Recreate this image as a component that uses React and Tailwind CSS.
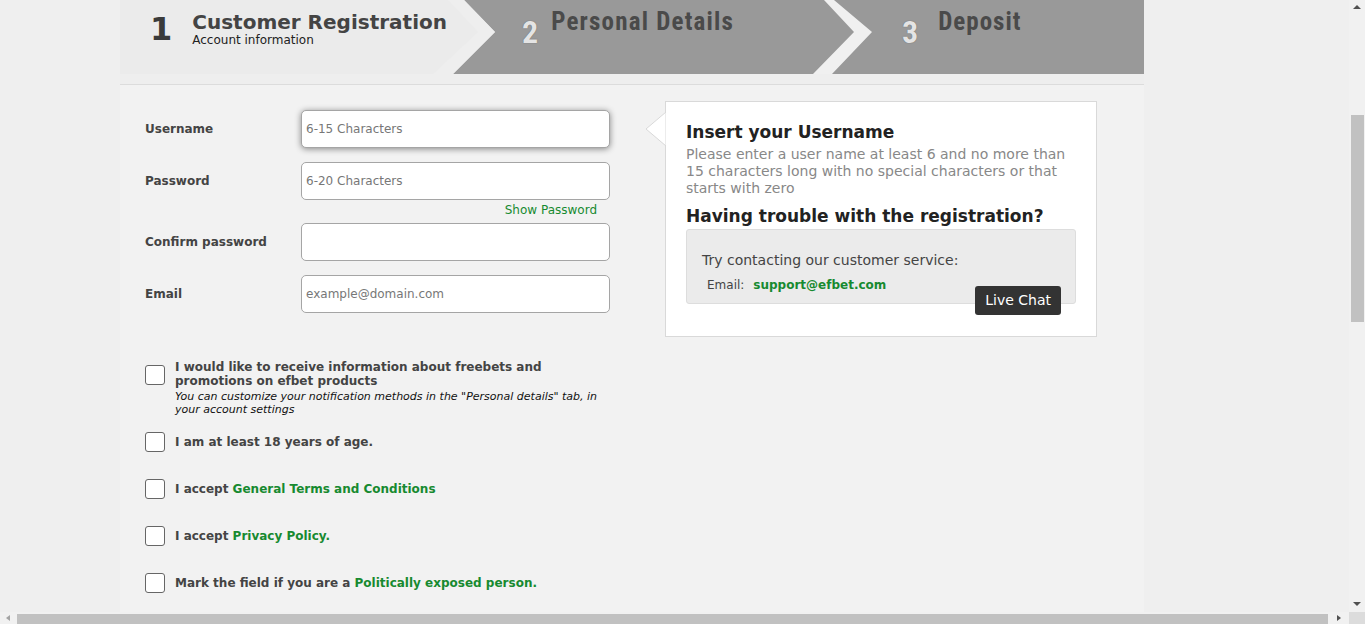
import React from "react"

const font = { fontFamily: '"DejaVu Sans", Verdana, sans-serif' }
const narrow = { fontFamily: '"Liberation Sans Narrow", "Roboto Condensed", "Liberation Sans", sans-serif' }

function StepHeader() {
  return (
    <div className="relative h-[74px]">
      {/* step shapes */}
      <svg className="absolute inset-0" width="1024" height="74" viewBox="0 0 1024 74">
        <rect x="0" y="0" width="1024" height="74" fill="#999999" />
        <polygon points="0,0 344,0 375,32 333,74 0,74" fill="#ebebeb" />
        <polygon points="328,0 344,0 375,32 333,74 313,74 358,32" fill="#eeeeee" />
        <polygon points="704,0 714,0 752,32 712,74 693,74 734,32" fill="#f0f0f0" />
      </svg>
      <div className="relative flex h-full">
        <div className="w-[375px] pl-[30px] flex items-start pt-[10px]">
          <span className="text-[32px] leading-[36px] font-bold text-[#3a3a3a] mt-[1px]" style={font}>1</span>
          <div className="ml-[20px]">
            <div className="text-[20px] leading-[24px] font-bold text-[#444]" style={font}>Customer Registration</div>
            <div className="text-[12px] leading-[13px] text-[#222]" style={font}>Account information</div>
          </div>
        </div>
        <div className="w-[377px] pl-[27px] flex items-start pt-[6px]">
          <span
            className="text-[32px] leading-[36px] font-bold text-[#e4e4e4] mt-[8px] [text-shadow:0_0_1px_#555]"
            style={narrow}
          >
            2
          </span>
          <span className="ml-[13px] mt-[1px] text-[25px] leading-[30px] font-bold tracking-[1.2px] text-[#4a4a4a]" style={narrow}>
            Personal Details
          </span>
        </div>
        <div className="flex-1 pl-[30px] flex items-start pt-[6px]">
          <span
            className="text-[32px] leading-[36px] font-bold text-[#e4e4e4] mt-[8px] [text-shadow:0_0_1px_#555]"
            style={narrow}
          >
            3
          </span>
          <span className="ml-[20px] mt-[1px] text-[25px] leading-[30px] font-bold tracking-[1px] text-[#4a4a4a]" style={narrow}>
            Deposit
          </span>
        </div>
      </div>
    </div>
  )
}

function Field({ label, placeholder, focused, children }) {
  return (
    <div>
      <div className="flex items-center">
        <label className="w-[156px] text-[12px] font-bold text-[#444]" style={font}>{label}</label>
        <input
          placeholder={placeholder}
          className={`w-[309px] h-[38px] bg-white border border-[#a5a5a5] rounded-[5px] px-[4px] text-[12px] text-[#333] placeholder:text-[#777] outline-none ${focused ? "shadow-[0_1px_6px_rgba(0,0,0,0.45)]" : ""}`}
          style={font}
        />
      </div>
      {children}
    </div>
  )
}

function Check({ children, className = "" }) {
  return (
    <div className={`flex items-center gap-[10px] ${className}`}>
      <div className="w-[20px] h-[20px] shrink-0 bg-white border border-[#666] rounded-[3px]"></div>
      <div className="text-[12px] font-bold text-[#444]" style={font}>{children}</div>
    </div>
  )
}

function VScroll() {
  return (
    <div className="w-[16px] bg-[#f1f1f1] flex flex-col items-center">
      <svg width="16" height="15" viewBox="0 0 16 15"><polygon points="4,9 12,9 8,5" fill="#505050" /></svg>
      <div className="h-[100px]"></div>
      <div className="w-[13px] ml-[1px] h-[207px] bg-[#c1c1c1]"></div>
      <div className="flex-1"></div>
      <svg width="16" height="15" viewBox="0 0 16 15"><polygon points="4,5 12,5 8,9" fill="#505050" /></svg>
    </div>
  )
}

function HScroll() {
  return (
    <div className="h-[12px] flex bg-[#f1f1f1]">
      <svg width="17" height="12" viewBox="0 0 17 12"><polygon points="10,3 10,9 6,6" fill="#a3a3a3" /></svg>
      <div className="w-[1311px] mt-[2px] h-[10px] bg-[#c1c1c1]"></div>
      <div className="flex-1 flex items-center justify-center">
        <svg width="8" height="12" viewBox="0 0 8 12"><polygon points="2,3 2,9 6,6" fill="#505050" /></svg>
      </div>
      <div className="w-[16px] bg-[#dcdcdc]"></div>
    </div>
  )
}

export default function App() {
  return (
    <div className="w-[1365px] h-[624px] flex flex-col overflow-hidden bg-[#efefef]">
      <div className="flex flex-1 min-h-0">
        <div className="flex-1 overflow-hidden">
          <div className="ml-[120px] w-[1024px] h-full bg-[#f2f2f2]">
            <StepHeader />
            <div className="h-[11px] bg-[#eeeeee] border-b border-[#dcdcdc]"></div>

            <div className="flex pl-[25px]">
              {/* form column */}
              <div className="w-[465px] pt-[25px]">
                <Field label="Username" placeholder="6-15 Characters" focused />
                <div className="h-[14px]"></div>
                <Field label="Password" placeholder="6-20 Characters">
                  <div className="flex justify-end pr-[13px] mt-[1px] h-[22px]">
                    <a className="text-[12px] text-[#178a30] leading-[18px]" style={font}>Show Password</a>
                  </div>
                </Field>
                <Field label="Confirm password" placeholder="" />
                <div className="h-[14px]"></div>
                <Field label="Email" placeholder="example@domain.com" />

                <div className="mt-[47px] flex items-start gap-[10px]">
                  <div className="w-[20px] h-[20px] shrink-0 mt-[5px] bg-white border border-[#666] rounded-[3px]"></div>
                  <div>
                    <div className="text-[12px] leading-[14px] font-bold text-[#444]" style={font}>
                      I would like to receive information about freebets and promotions on efbet products
                    </div>
                    <div className="text-[11px] leading-[13px] italic text-[#111] mt-[2px]" style={font}>
                      You can customize your notification methods in the "Personal details" tab, in your account settings
                    </div>
                  </div>
                </div>
                <Check className="mt-[16px]">I am at least 18 years of age.</Check>
                <Check className="mt-[27px]">
                  I accept <span className="text-[#178a30]">General Terms and Conditions</span>
                </Check>
                <Check className="mt-[27px]">
                  I accept <span className="text-[#178a30]">Privacy Policy.</span>
                </Check>
                <Check className="mt-[27px]">
                  Mark the field if you are a <span className="text-[#178a30]">Politically exposed person.</span>
                </Check>
              </div>

              {/* help panel */}
              <div className="ml-[55px] mt-[16px] relative w-[432px] self-start bg-white border border-[#d9d9d9] px-[20px] pt-[20px] pb-[32px]">
                <svg className="absolute left-[-21px] top-[10px]" width="22" height="35" viewBox="0 0 22 35">
                  <polygon points="21,0 1,17 21,34" fill="#ffffff" stroke="#d9d9d9" strokeWidth="1" />
                  <rect x="21" y="0" width="2" height="35" fill="#ffffff" />
                </svg>
                <div className="text-[17px] leading-[20px] font-bold text-[#222]" style={font}>Insert your Username</div>
                <div className="text-[14px] leading-[17px] text-[#888] mt-[4px]" style={font}>
                  Please enter a user name at least 6 and no more than 15 characters long with no special characters or that starts with zero
                </div>
                <div className="text-[17px] leading-[20px] font-bold text-[#222] mt-[9px]" style={font}>
                  Having trouble with the registration?
                </div>
                <div className="relative mt-[3px] h-[75px] bg-[#ebebeb] border border-[#dddddd] rounded-[3px] pl-[15px] pt-[21px]">
                  <div className="text-[14px] leading-[18px] text-[#444]" style={font}>Try contacting our customer service:</div>
                  <div className="mt-[8px] pl-[5px] flex items-center gap-[9px] text-[12px] leading-[16px]" style={font}>
                    <span className="text-[#444]">Email:</span>
                    <span className="font-bold text-[#178a30]">support@efbet.com</span>
                  </div>
                  <div className="absolute right-[14px] top-[56px] h-[29px] px-[10px] rounded-[3px] bg-[#333] text-white text-[14px] leading-[29px]" style={font}>
                    Live Chat
                  </div>
                </div>
              </div>
            </div>
          </div>
        </div>
        <VScroll />
      </div>
      <HScroll />
    </div>
  )
}
